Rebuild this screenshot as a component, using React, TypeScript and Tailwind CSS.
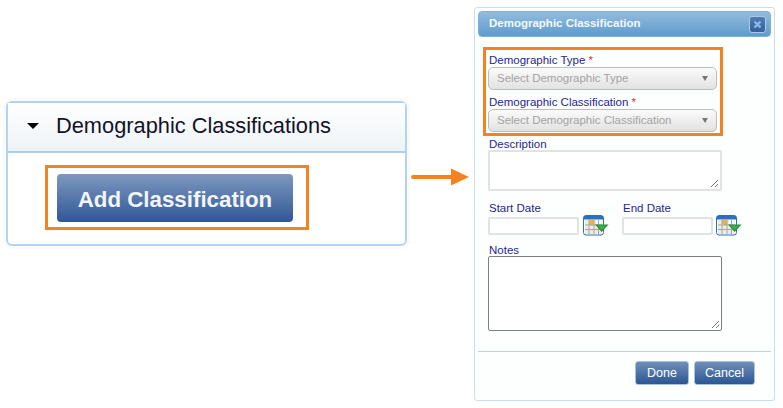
function CalendarIcon() {
  return (
    <svg width="26" height="21" viewBox="0 0 26 21" className="shrink-0">
      <rect x="0.5" y="0.5" width="20" height="19.5" rx="2.5" fill="#ffffff" stroke="#2b6fbe" />
      <rect x="1" y="1" width="19" height="3.5" fill="#2b6fbe" />
      <rect x="2" y="5" width="17" height="14" fill="#eeebe4" />
      <rect x="6" y="5" width="5" height="5" fill="#f2b233" />
      <rect x="13" y="5" width="5" height="4" fill="#fbfbf8" />
      <path d="M2 10H19M2 14.5H19M6 5V19M11 5V19M15.5 5V19" stroke="#a8a69e" strokeWidth="1" fill="none" />
      <path d="M12 9.5H25.5L18.7 17Z" fill="#23913a" />
      <path d="M14.5 10.5H23L18.7 15Z" fill="#45ad50" />
    </svg>
  );
}

function SelectBox({ text, className }: { text: string; className: string }) {
  return (
    <div
      className={`flex h-[23px] w-[229px] items-center justify-between rounded-[5px] border-[1.5px] border-[#bcbcbc] bg-gradient-to-b from-[#fbfbfb] to-[#e2e2e2] pl-[8px] pr-[8px] text-[11.5px] text-[#a3a3a3] ${className}`}
    >
      <span>{text}</span>
      <span className="h-0 w-0 border-x-[3px] border-t-[5px] border-x-transparent border-t-[#777777]" />
    </div>
  );
}

function FieldLabel({ text, required }: { text: string; required?: boolean }) {
  return (
    <div className="ml-[1px] h-[15px] whitespace-nowrap text-[11.5px] leading-[15px] text-[#27278a]">
      {text}
      {required && <span className="text-[#e03030]"> *</span>}
    </div>
  );
}

function DialogButton({ text, width }: { text: string; width: string }) {
  return (
    <div
      className={`flex h-[24px] items-center justify-center rounded-[3px] border border-[#a9c3dc] bg-gradient-to-b from-[#6f8fb9] to-[#2b5594] text-[12.5px] text-white ${width}`}
    >
      {text}
    </div>
  );
}

function ResizeGrip() {
  return (
    <svg width="9" height="9" viewBox="0 0 9 9" className="absolute bottom-[1px] right-[1px]">
      <path d="M1 8L8 1M5 8L8 5" stroke="#777777" strokeWidth="1" fill="none" />
    </svg>
  );
}

export default function App() {
  return (
    <div className="flex h-[408px] w-[783px] items-start overflow-hidden bg-white font-['Liberation_Sans',Arial,sans-serif]">
      <section className="ml-[6px] mt-[101px] h-[145px] w-[401px] shrink-0 rounded-[6px] border-2 border-[#b4d4ee] shadow-[0_0_0_3px_#fafafa]">
        <div className="flex h-[50px] items-center border-b-2 border-[#a9cfec] bg-gradient-to-b from-white to-[#eef3f6] pb-[2px] pl-[19px]">
          <span className="h-0 w-0 border-x-[6px] border-t-[6px] border-x-transparent border-t-black" />
          <span className="ml-[17px] text-[21.8px] text-[#12122a]">Demographic Classifications</span>
        </div>
        <div className="ml-[37px] mt-[12px] flex h-[65px] w-[264px] items-center border-[3px] border-[#f58220] pl-[9px]">
          <div className="flex h-[48px] w-[236px] items-center justify-center rounded-[4px] bg-gradient-to-b from-[#7f98bf] to-[#2f5796] pt-[5px] text-[22.3px] font-bold text-[#f2f6fb]">
            Add Classification
          </div>
        </div>
      </section>

      <svg width="58" height="18" viewBox="0 0 58 18" className="ml-[4px] mt-[168px] shrink-0">
        <path d="M2 9H41" stroke="#f58220" strokeWidth="4" strokeLinecap="round" />
        <path d="M40 0.5L58 9L40 17.5Z" fill="#f58220" />
      </svg>

      <section className="ml-[5px] mt-[7px] flex h-[394px] w-[301px] shrink-0 flex-col rounded-[3px] border border-[#c9def0] bg-[#fdfefe] px-[3px] pt-[3px]">
        <div className="flex h-[26px] items-center justify-between rounded-[4px] border border-[#7db0da] bg-gradient-to-b from-[#92bcdf] to-[#5e9bcb] pl-[10px] pr-[4px] text-[11.5px] font-bold text-[#f4f8fc]">
          <span>Demographic Classification</span>
          <span className="flex h-[17px] w-[17px] items-center justify-center rounded-[3px] border border-[#a9c8e4] bg-gradient-to-b from-[#4f7cb4] to-[#34609c]">
            <svg width="9" height="9" viewBox="0 0 9 9">
              <path d="M1.5 1.5L7.5 7.5M7.5 1.5L1.5 7.5" stroke="#8fb8e0" strokeWidth="2.4" />
            </svg>
          </span>
        </div>

        <div className="ml-[5px] mt-[10px] h-[89px] w-[240px] shrink-0 border-[3px] border-[#f58220] pl-[2px] pt-[3px]">
          <FieldLabel text="Demographic Type" required />
          <SelectBox text="Select Demographic Type" className="mt-[-1px]" />
          <div className="mt-[5px]">
            <FieldLabel text="Demographic Classification" required />
          </div>
          <SelectBox text="Select Demographic Classification" className="mt-[-1px]" />
        </div>

        <div className="ml-[10px] w-[234px]">
          <div className="mt-[1px]">
            <FieldLabel text="Description" />
          </div>
          <div className="relative mt-[-2px] h-[41px] rounded-[2px] border-2 border-[#e2e2e2] bg-white">
            <ResizeGrip />
          </div>

          <div className="mt-[10px] flex">
            <div className="w-[134px] shrink-0">
              <FieldLabel text="Start Date" />
              <div className="mt-[-1px] flex items-center gap-[4px]">
                <div className="h-[18px] w-[91px] rounded-[2px] border-2 border-[#e2e2e2] bg-white" />
                <CalendarIcon />
              </div>
            </div>
            <div className="shrink-0">
              <FieldLabel text="End Date" />
              <div className="mt-[-1px] flex items-center gap-[3px]">
                <div className="h-[18px] w-[91px] rounded-[2px] border-2 border-[#e2e2e2] bg-white" />
                <CalendarIcon />
              </div>
            </div>
          </div>

          <div className="mt-[7px]">
            <FieldLabel text="Notes" />
          </div>
          <div className="relative mt-[-2px] h-[75px] rounded-[2px] border border-[#7f7f7f] bg-white">
            <ResizeGrip />
          </div>
        </div>

        <div className="mt-[20px] border-t border-[#b5d3ea]" />
        <div className="mr-[16px] mt-[9px] flex justify-end gap-[5px]">
          <DialogButton text="Done" width="w-[54px]" />
          <DialogButton text="Cancel" width="w-[61px]" />
        </div>
      </section>
    </div>
  );
}
